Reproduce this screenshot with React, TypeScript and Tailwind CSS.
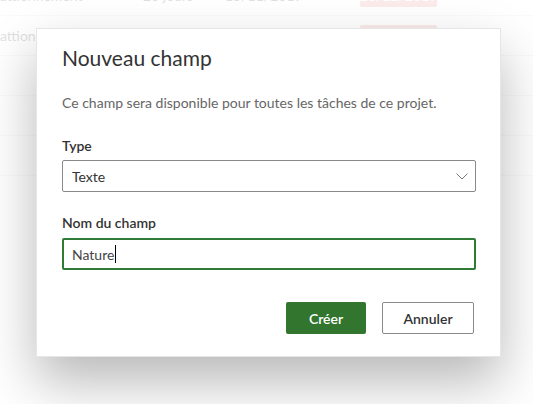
const ROWS = [
  { name: 'attionnement', days: '23 jours', start: '15/11/2019', end: '20/12/2019' },
  { name: 'attionnement', days: '12 jours', start: '02/12/2019', end: '18/12/2019' },
  { name: '', days: '', start: '', end: '' },
  { name: '', days: '', start: '', end: '' },
  { name: '', days: '', start: '', end: '' },
];

export default function App() {
  return (
    <div className="relative h-[404px] w-[533px] overflow-hidden bg-white font-['Lato',sans-serif]">
      {/* table behind the dialog */}
      <div className="-mt-[24px] flex flex-col">
        {ROWS.map((r, i) => (
          <div key={i} className="flex h-[40px] items-center border-b border-[#e4e4e4] text-[14px] text-[#666]">
            <span className="w-[143px]">{r.name}</span>
            <span className="w-[82px]">{r.days}</span>
            <span className="w-[135px]">{r.start}</span>
            {r.end && (
              <span className="flex h-[22px] w-[77px] items-center justify-center rounded-[2px] bg-[#ef9a9a] text-white">
                {r.end}
              </span>
            )}
          </div>
        ))}
      </div>

      {/* overlay */}
      <div className="absolute inset-0 bg-white/80" />

      {/* dialog */}
      <div className="absolute left-[36px] top-[28px] flex h-[329px] w-[465px] flex-col border border-[#e6e6e6] bg-white px-[25px] pt-[15px] shadow-[0_25px_50px_rgba(0,0,0,0.28)]">
        <h2 className="text-[21px] leading-[28px] font-normal text-[#333]">Nouveau champ</h2>
        <p className="mt-[21px] text-[14px] leading-[20px] text-[#666]">
          Ce champ sera disponible pour toutes les tâches de ce projet.
        </p>

        <label className="mt-[23px] text-[14px] leading-[20px] font-semibold text-[#333]">Type</label>
        <div className="mt-[4px] flex h-[32px] w-[414px] items-center justify-between rounded-[2px] border border-[#8a8a8a] pl-[9px] pr-[6px] text-[14px] text-[#333]">
          <span>Texte</span>
          <svg width="14" height="14" viewBox="0 0 14 14" fill="none" className="text-[#777]">
            <path d="M1.5 4.5 L7 10 L12.5 4.5" stroke="currentColor" strokeWidth="1" />
          </svg>
        </div>

        <label className="mt-[21px] text-[14px] leading-[20px] font-semibold text-[#333]">Nom du champ</label>
        <div className="mt-[5px] flex h-[32px] w-[414px] items-center rounded-[2px] border-2 border-[#2f7a34] px-[8px] text-[14px] text-[#444]">
          <span>Nature</span>
          <span className="ml-[1px] h-[18px] w-[1px] bg-black" />
        </div>

        <div className="mt-[32px] flex justify-end gap-[16px] pr-[1px]">
          <button className="h-[32px] w-[80px] rounded-[2px] bg-[#31752f] text-[14px] font-semibold text-white">
            Créer
          </button>
          <button className="h-[32px] w-[92px] rounded-[2px] border border-[#8a8a8a] bg-white text-[14px] font-semibold text-[#333]">
            Annuler
          </button>
        </div>
      </div>
    </div>
  );
}
